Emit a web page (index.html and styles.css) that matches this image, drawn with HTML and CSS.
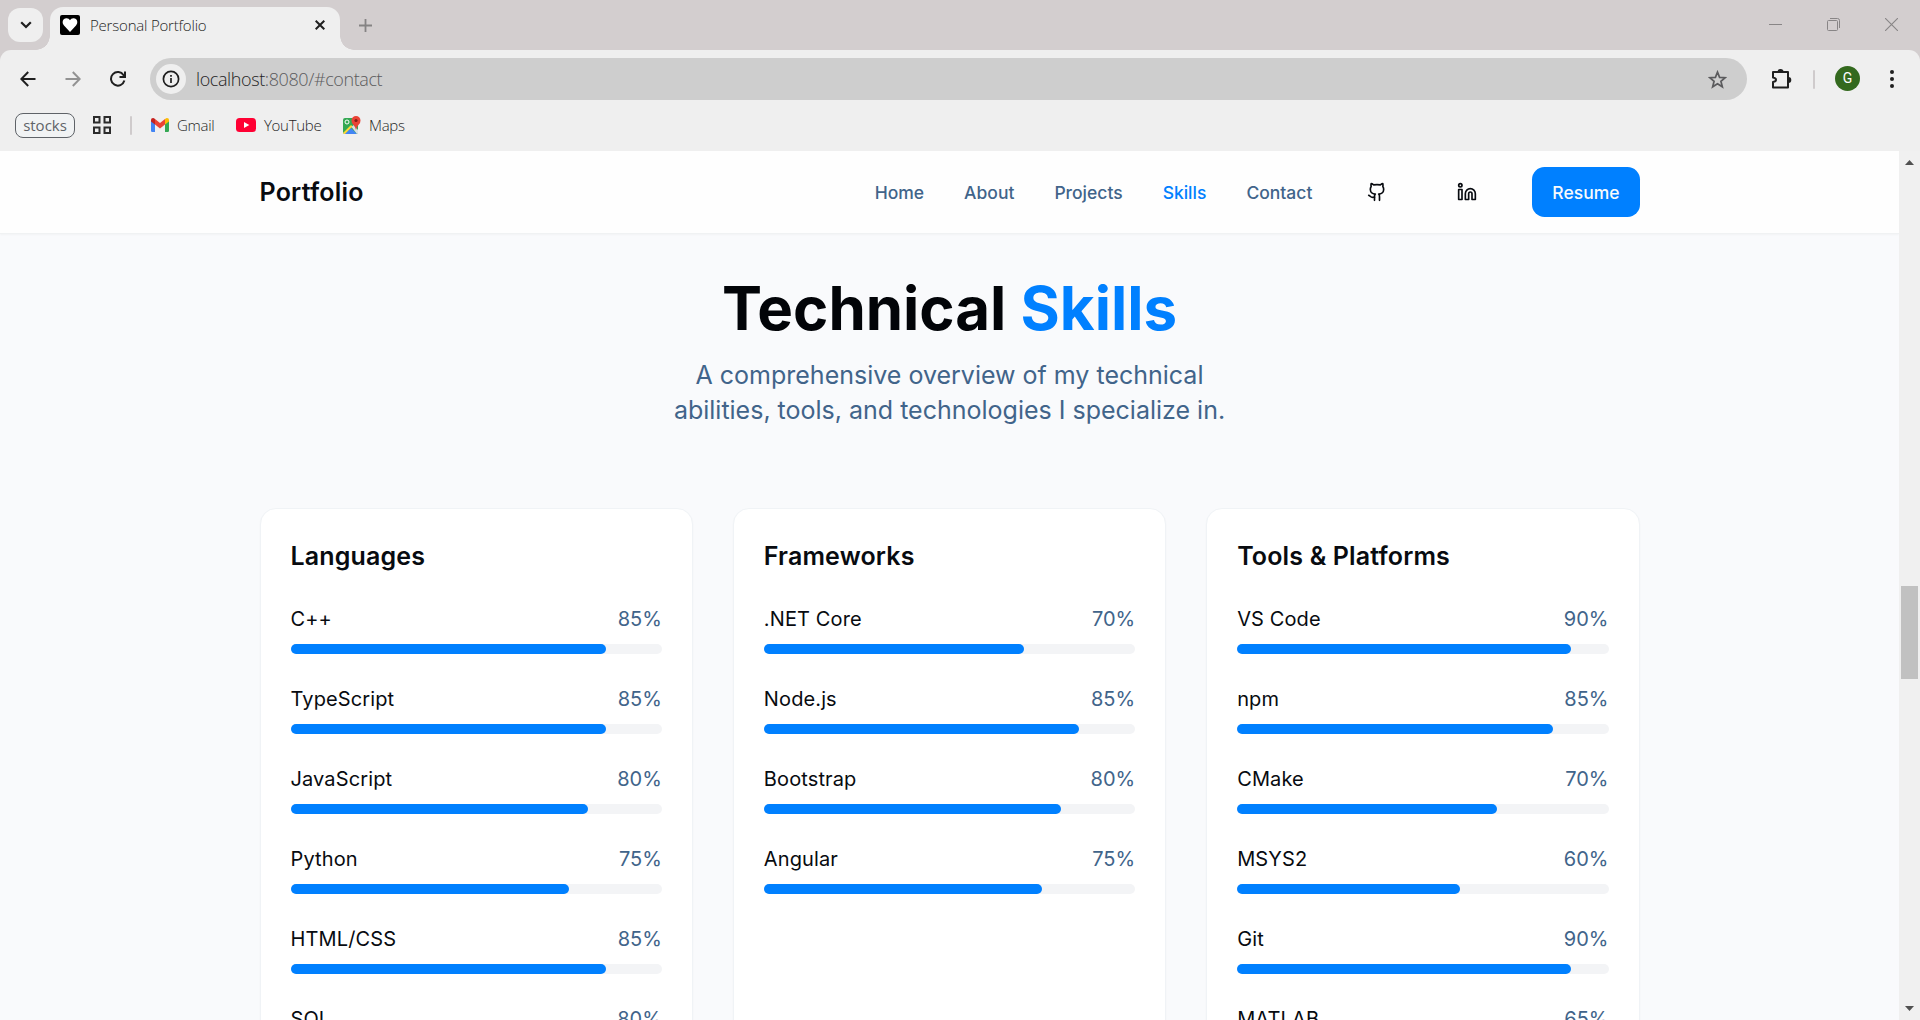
FILE: index.html
```html
<!DOCTYPE html>
<html lang="en">
<head>
<meta charset="utf-8">
<title>Personal Portfolio</title>
<link rel="stylesheet" href="styles.css">
</head>
<body>
<div class="tabstrip">
  <div class="tab-search"><svg width="12" height="8" viewBox="0 0 12 8" fill="none" stroke="#1f1f1f" stroke-width="2.2"><path d="M1.2 1.2 6 6l4.800-4.800"/></svg></div>
  <div class="tab">
    <svg class="favicon" width="20" height="20" viewBox="0 0 20 20"><rect width="20" height="20" rx="2" fill="#000"/><path d="M10 17 4 10.500C1.500 7.600 2.800 3.500 6.300 3.300 8 3.200 9.300 4 10 5.200c.7-1.200 2-2 3.700-1.900 3.500.2 4.800 4.300 2.300 7.200z" fill="#fff"/></svg>
    <span class="tab-title">Personal Portfolio</span>
    <svg width="10" height="10" viewBox="0 0 10 10" stroke="#1f1f1f" stroke-width="2"><path d="m.7.700 8.600 8.600M9.300.700.700 9.300"/></svg>
  </div>
  <svg class="new-tab" width="13" height="13" viewBox="0 0 13 13" stroke="#858384" stroke-width="1.800"><path d="M6.500 0v13M0 6.500h13"/></svg>
  <div class="window-buttons">
    <svg width="13" height="13" viewBox="0 0 13 13" stroke="#888586" stroke-width="1"><path d="M0 6.500h13"/></svg>
    <svg width="13" height="13" viewBox="0 0 13 13" fill="none" stroke="#888586" stroke-width="1"><rect x=".5" y="2.500" width="10" height="10" rx="1"/><path d="M3 .5h7.500a2 2 0 0 1 2 2V10"/></svg>
    <svg width="13" height="13" viewBox="0 0 13 13" stroke="#888586" stroke-width="1.100"><path d="m0 0 13 13M13 0 0 13"/></svg>
  </div>
</div>
<div class="chrome">
  <div class="toolbar">
    <svg class="back" width="16" height="16" viewBox="0 0 16 16" fill="none" stroke="#1f1f1f" stroke-width="2"><path d="M15.500 8H1.500M8.200 1 1.300 8l6.900 7"/></svg>
    <svg class="forward" width="16" height="16" viewBox="0 0 16 16" fill="none" stroke="#929292" stroke-width="2"><path d="M.5 8h14M7.800 1l6.900 7-6.900 7"/></svg>
    <svg class="reload" width="16" height="16" viewBox="0 0 16 16" fill="none" stroke="#1f1f1f" stroke-width="2"><path d="M14.400 9.600A6.800 6.800 0 1 1 13.600 4.200L15 5.800M15 .5v5.500H9.500"/></svg>
    <div class="omnibox">
      <span class="site-info"><svg width="18" height="18" viewBox="0 0 18 18" fill="none" stroke="#1f1f1f" stroke-width="1.700"><circle cx="9" cy="9" r="7.600"/><path d="M9 8v5M9 5v1.800"/></svg></span>
      <span class="url">localhost<span class="url-rest">:8080/#contact</span></span>
      <svg class="star" width="19" height="19" viewBox="0 0 20 20" fill="none" stroke="#5b5b5d" stroke-width="1.800"><path d="m10 2.200 2.200 5.500 5.900.4-4.500 3.800 1.500 5.800-5.100-3.200-5.100 3.200 1.500-5.800-4.500-3.800 5.900-.4z"/></svg>
    </div>
    <svg class="puzzle" width="21" height="20" viewBox="0 0 21 20"><path d="M2 3h15v15.500H2v-5.500q3-.5 3-2.300T2 8.400z" fill="none" stroke="#1f1f1f" stroke-width="2" stroke-linejoin="round"/><path d="M6.500 2.500a3 2.500 0 0 1 6 0zM17.500 8a2.800 3 0 0 1 0 6z" fill="#1f1f1f"/></svg>
    <span class="divider"></span>
    <span class="avatar">G</span>
    <svg class="menu" width="4" height="18" viewBox="0 0 4 18" fill="#1f1f1f"><circle cx="2" cy="2" r="2"/><circle cx="2" cy="9" r="2"/><circle cx="2" cy="16" r="2"/></svg>
  </div>
  <div class="bookmarks">
    <span class="group">stocks</span>
    <svg class="apps" width="18" height="18" viewBox="0 0 18 18" fill="none" stroke="#2b2b2b" stroke-width="2"><path d="M1 1h5.500v5.500H1zM11.500 1H17v5.500h-5.500zM1 11.500h5.500V17H1zM11.500 11.500H17V17h-5.500z"/></svg>
    <span class="divider"></span>
    <svg class="gmail" width="18" height="14" viewBox="0 0 18 14"><path d="M0 2v10.800Q0 14 1.200 14H4V5.500z" fill="#4285f4"/><path d="M14 14h2.800q1.200 0 1.200-1.200V2l-4 3.500z" fill="#34a853"/><path d="M14 1v5.500l4-3V2q0-2-2-2-.8 0-2 1z" fill="#fbbc04"/><path d="M4 6.500V1l5 4 5-4v5.500l-5 4z" fill="#ea4335"/><path d="M0 2v1.500l4 3V1Q3 0 2 0 0 0 0 2z" fill="#c5221f"/></svg>
    <span class="label gmail-label">Gmail</span>
    <svg class="youtube" width="20" height="14" viewBox="0 0 20 14"><rect width="20" height="14" rx="3.500" fill="#ff0033"/><path d="m8 4 5.300 3L8 10z" fill="#fff"/></svg>
    <span class="label youtube-label">YouTube</span>
    <svg class="maps" width="19" height="19" viewBox="0 0 19 19"><rect x="1" y="2" width="15" height="16" rx="2" fill="#34a853"/><path d="m1 17 8-8 1.500 1.500-7 7.500H2z" fill="#fdd835"/><path d="m3 18 6-6 6 6z" fill="#4285f4"/><path d="m9.500 11 2-2 4.500 5v3l-1 1z" fill="#dce0e5"/><circle cx="5" cy="6" r="2" fill="none" stroke="#fff" stroke-width="1"/><path d="M14 14q-.4-3-2.800-5.400Q9.500 7 9.500 4.500a4.500 4.500 0 0 1 9 0Q18.500 7 16.800 8.600 14.500 11 14 14z" fill="#ea4335"/><circle cx="14" cy="4.500" r="1.600" fill="#811e18"/></svg>
    <span class="label maps-label">Maps</span>
  </div>
</div>
<div class="viewport">
  <div class="page">
    <header class="site-header">
      <div class="container header-inner">
        <span class="brand">Portfolio</span>
        <nav class="nav">
          <a>Home</a><a>About</a><a>Projects</a><a class="active">Skills</a><a>Contact</a>
          <span class="icon-button"><svg class="lucide" viewBox="0 0 24 24"><path d="M15 22v-4a4.800 4.800 0 0 0-1-3.500c3 0 6-2 6-5.500.08-1.250-.27-2.480-1-3.500.28-1.150.28-2.350 0-3.500 0 0-1 0-3 1.500-2.640-.5-5.360-.5-8 0C6 2 5 2 5 2c-.3 1.150-.3 2.350 0 3.500A5.403 5.403 0 0 0 4 9c0 3.500 3 5.500 6 5.500-.39.490-.68 1.050-.85 1.650-.17.600-.22 1.230-.15 1.850v4"/><path d="M9 18c-4.510 2-5-2-7-2"/></svg></span>
          <span class="icon-button"><svg class="lucide" viewBox="0 0 24 24"><path d="M16 8a6 6 0 0 1 6 6v7h-4v-7a2 2 0 0 0-2-2 2 2 0 0 0-2 2v7h-4v-7a6 6 0 0 1 6-6z"/><rect width="4" height="12" x="2" y="9"/><circle cx="4" cy="4" r="2"/></svg></span>
          <a class="resume">Resume</a>
        </nav>
      </div>
    </header>
    <main class="container skills">
      <h1>Technical <span class="accent">Skills</span></h1>
      <p class="lead">A comprehensive overview of my technical<br>abilities, tools, and technologies I specialize in.</p>
      <div class="cards">
        <section class="card">
          <h2>Languages</h2>
          <div class="skill"><div class="row"><span class="name">C++</span><span class="pct">85%</span></div><div class="bar"><div class="fill" style="width:85%"></div></div></div>
          <div class="skill"><div class="row"><span class="name">TypeScript</span><span class="pct">85%</span></div><div class="bar"><div class="fill" style="width:85%"></div></div></div>
          <div class="skill"><div class="row"><span class="name">JavaScript</span><span class="pct">80%</span></div><div class="bar"><div class="fill" style="width:80%"></div></div></div>
          <div class="skill"><div class="row"><span class="name">Python</span><span class="pct">75%</span></div><div class="bar"><div class="fill" style="width:75%"></div></div></div>
          <div class="skill"><div class="row"><span class="name">HTML/CSS</span><span class="pct">85%</span></div><div class="bar"><div class="fill" style="width:85%"></div></div></div>
          <div class="skill"><div class="row"><span class="name">SQL</span><span class="pct">80%</span></div><div class="bar"><div class="fill" style="width:80%"></div></div></div>
        </section>
        <section class="card">
          <h2>Frameworks</h2>
          <div class="skill"><div class="row"><span class="name">.NET Core</span><span class="pct">70%</span></div><div class="bar"><div class="fill" style="width:70%"></div></div></div>
          <div class="skill"><div class="row"><span class="name">Node.js</span><span class="pct">85%</span></div><div class="bar"><div class="fill" style="width:85%"></div></div></div>
          <div class="skill"><div class="row"><span class="name">Bootstrap</span><span class="pct">80%</span></div><div class="bar"><div class="fill" style="width:80%"></div></div></div>
          <div class="skill"><div class="row"><span class="name">Angular</span><span class="pct">75%</span></div><div class="bar"><div class="fill" style="width:75%"></div></div></div>
        </section>
        <section class="card">
          <h2>Tools &amp; Platforms</h2>
          <div class="skill"><div class="row"><span class="name">VS Code</span><span class="pct">90%</span></div><div class="bar"><div class="fill" style="width:90%"></div></div></div>
          <div class="skill"><div class="row"><span class="name">npm</span><span class="pct">85%</span></div><div class="bar"><div class="fill" style="width:85%"></div></div></div>
          <div class="skill"><div class="row"><span class="name">CMake</span><span class="pct">70%</span></div><div class="bar"><div class="fill" style="width:70%"></div></div></div>
          <div class="skill"><div class="row"><span class="name">MSYS2</span><span class="pct">60%</span></div><div class="bar"><div class="fill" style="width:60%"></div></div></div>
          <div class="skill"><div class="row"><span class="name">Git</span><span class="pct">90%</span></div><div class="bar"><div class="fill" style="width:90%"></div></div></div>
          <div class="skill"><div class="row"><span class="name">MATLAB</span><span class="pct">65%</span></div><div class="bar"><div class="fill" style="width:65%"></div></div></div>
        </section>
      </div>
    </main>
  </div>
  <div class="scrollbar">
    <svg width="9" height="5" viewBox="0 0 9 5" fill="#505050"><path d="M0 5 4.500 0 9 5z"/></svg>
    <div class="thumb"></div>
    <svg class="down" width="9" height="5" viewBox="0 0 9 5" fill="#505050"><path d="m0 0 4.500 5L9 0z"/></svg>
  </div>
</div>
</body>
</html>
```
FILE: styles.css
```css
* { box-sizing: border-box; }
body {
  margin: 0;
  width: 1920px;
  height: 1020px;
  overflow: hidden;
  display: flex;
  flex-direction: column;
  background: #d3cecf;
  font-family: Inter, sans-serif;
}
svg { display: block; flex: none; }

/* Browser frame */
.tabstrip, .chrome { font-family: "Open Sans", "Noto Sans", sans-serif; font-weight: 300; color: #1f1f1f; }
.tabstrip { height: 50px; flex: none; display: flex; padding-left: 8px; }
.tab-search {
  width: 35px; height: 34px; margin-top: 8px; border-radius: 12px;
  background: #efefef; display: flex; align-items: center; justify-content: center;
}
.tab {
  position: relative; width: 290px; height: 43px; margin: 7px 0 0 7px; padding: 0 15px 7px 10px;
  display: flex; align-items: center; background: #efefef; border-radius: 13px 13px 0 0;
}
.tab::before, .tab::after { content: ""; position: absolute; bottom: 0; width: 14px; height: 14px; }
.tab::before { left: -14px; background: radial-gradient(circle at 0 0, transparent 13.5px, #efefef 14px); }
.tab::after { right: -14px; background: radial-gradient(circle at 100% 0, transparent 13.5px, #efefef 14px); }
.tab-title { flex: 1; margin-left: 10px; font-size: 15px; line-height: 20px; letter-spacing: -0.2px; }
.new-tab { margin: 19px 0 0 19px; }
.window-buttons { display: flex; gap: 45px; margin: 18px 22px 0 auto; }
.chrome { height: 101px; flex: none; background: #efefef; border-radius: 11px 11px 0 0; }
.toolbar { height: 58px; display: flex; align-items: center; padding-left: 20px; }
.forward { margin-left: 29px; }
.reload { margin-left: 29px; }
.omnibox {
  width: 1597px; height: 42px; margin-left: 24px; padding: 0 20px 0 6px; border-radius: 21px;
  background: #cecece; display: flex; align-items: center;
}
.site-info { width: 30px; height: 30px; border-radius: 50%; background: #efefef; display: flex; align-items: center; justify-content: center; }
.url { flex: 1; margin-left: 10px; font-size: 18px; letter-spacing: -0.4px; }
.url-rest { color: #5b5b5d; }
.puzzle { margin-left: 24px; }
.divider { width: 2px; height: 19px; background: #cfcbcc; border-radius: 1px; }
.toolbar .divider { margin-left: 21px; }
.avatar {
  width: 25px; height: 25px; margin: 0 0 1px 20px; border-radius: 50%; background: #33691e; color: #fff;
  font: 14px/25px Roboto, sans-serif; text-align: center;
}
.menu { margin-left: 30px; }
.bookmarks { height: 34px; display: flex; align-items: center; padding-left: 15px; font-size: 15px; letter-spacing: -0.3px; }
.group {
  width: 60px; height: 25px; border: 1px solid #5f6368; border-radius: 8px; background: #f1f3f4;
  color: #5f6368; text-align: center; line-height: 22px; font-weight: 400; letter-spacing: 0;
}
.apps { margin-left: 18px; }
.bookmarks .divider { margin-left: 19px; }
.gmail { margin-left: 19px; }
.gmail-label { width: 50px; margin-left: 8px; }
.youtube { margin-left: 9px; }
.youtube-label { width: 70px; margin-left: 8px; }
.maps { margin-left: 8px; }
.maps-label { margin-left: 8px; }

/* Page */
.viewport { flex: 1; min-height: 0; display: flex; }
.page { width: 1899px; background: #f9fafc; overflow: hidden; }
.container { width: 1440px; margin: 0 auto; padding: 0 30px; }
.site-header { background: #fefefe; border-bottom: 1px solid #f0f2f3; box-shadow: 0 1px 2px rgba(0, 0, 0, 0.03); }
.header-inner { height: 82px; display: flex; align-items: center; justify-content: space-between; }
.brand { font-size: 25px; font-weight: 600; letter-spacing: 0.2px; color: #080b10; }
.nav { display: flex; align-items: center; gap: 40px; font-size: 17.5px; font-weight: 500; color: #41648a; }
.active, .accent { color: #0080ff; }
.icon-button { width: 50px; height: 50px; display: flex; align-items: center; justify-content: center; }
.lucide { width: 20px; height: 20px; fill: none; stroke: #080b10; stroke-width: 2; stroke-linecap: round; stroke-linejoin: round; }
.resume { height: 50px; padding: 0 20px; border-radius: 12.5px; background: #0080ff; color: #f8fafc; line-height: 52px; }
.skills { padding-top: 44px; text-align: center; }
h1 { margin: 0; font-size: 60px; line-height: 60px; font-weight: 700; color: #020408; }
.lead { margin: 20px 0 80px; font-size: 25px; line-height: 35px; color: #41648a; }
.cards { display: grid; grid-template-columns: repeat(3, 1fr); gap: 40px; text-align: left; }
.card {
  height: 640px; padding: 30px; background: #fff; border: 1px solid #f0f3f6; border-radius: 16px;
  box-shadow: 0 1px 2px rgba(0, 0, 0, 0.03);
}
h2 { margin: 0 0 30px; font-size: 25px; line-height: 35px; font-weight: 600; letter-spacing: 0.15px; color: #080b10; }
.skill { margin-bottom: 30px; }
.row { display: flex; justify-content: space-between; font-size: 20px; line-height: 30px; color: #080b10; }
.name { letter-spacing: 0.12px; }
.pct { color: #41648a; }
.bar { height: 10px; margin-top: 10px; border-radius: 5px; background: #f3f4f6; }
.fill { height: 100%; border-radius: 5px; background: #0080ff; }
.scrollbar { width: 21px; padding: 9px 0 9px; background: #f0f0f0; display: flex; flex-direction: column; align-items: center; }
.thumb { width: 17px; height: 93px; margin-top: 421px; background: #c1c1c1; }
.down { margin-top: auto; }
```
